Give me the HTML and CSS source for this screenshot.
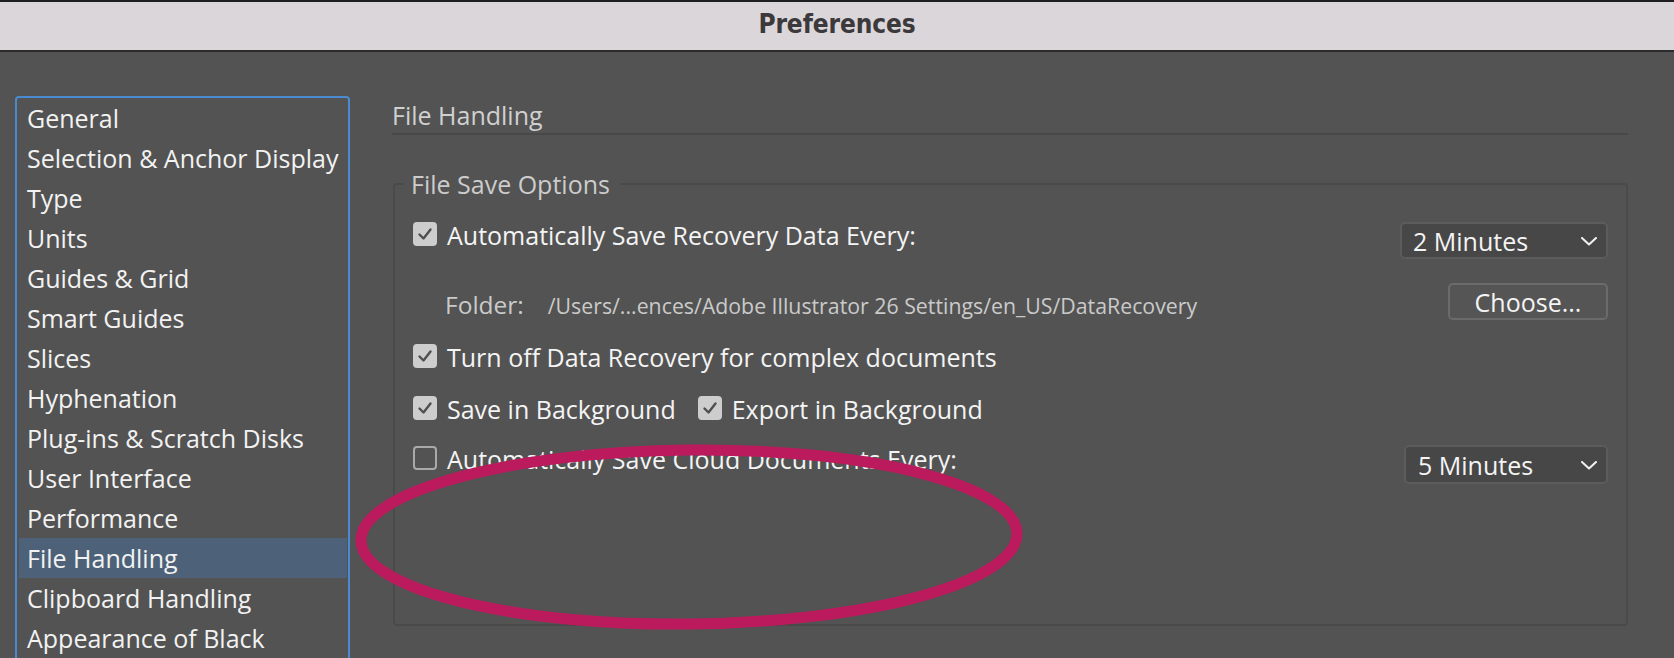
FILE: index.html
```html
<!DOCTYPE html>
<html lang="en">
<head>
<meta charset="utf-8">
<title>Preferences</title>
<link rel="stylesheet" href="styles.css">
</head>
<body>
<div class="window">
  <header class="titlebar"><span class="title">Preferences</span></header>
  <div class="content">
    <nav class="sidebar">
      <div class="item">General</div>
      <div class="item">Selection &amp; Anchor Display</div>
      <div class="item">Type</div>
      <div class="item">Units</div>
      <div class="item">Guides &amp; Grid</div>
      <div class="item">Smart Guides</div>
      <div class="item">Slices</div>
      <div class="item">Hyphenation</div>
      <div class="item">Plug-ins &amp; Scratch Disks</div>
      <div class="item">User Interface</div>
      <div class="item">Performance</div>
      <div class="item selected">File Handling</div>
      <div class="item">Clipboard Handling</div>
      <div class="item">Appearance of Black</div>
    </nav>
    <main class="main">
      <h2 class="section-title">File Handling</h2>
      <fieldset class="group">
        <legend class="legend">File Save Options</legend>
        <div class="row row-1">
          <label class="check"><span class="box checked"><svg viewBox="0 0 24 24" width="24" height="24"><path d="M6.5 12.5 L10.5 16.5 L17.5 7.5" fill="none" stroke="#4f4f4f" stroke-width="2.4" stroke-linecap="round" stroke-linejoin="round"/></svg></span><span class="label">Automatically Save Recovery Data Every:</span></label>
          <div class="select select-1"><span>2 Minutes</span><svg class="chev" viewBox="0 0 16 9" width="16" height="9"><path d="M1 1 L8 7.5 L15 1" fill="none" stroke="#f2f2f2" stroke-width="2" stroke-linecap="round" stroke-linejoin="round"/></svg></div>
        </div>
        <div class="row row-2">
          <div class="folder"><span class="folder-label">Folder:</span><span class="path">/Users/...ences/Adobe Illustrator 26 Settings/en_US/DataRecovery</span></div>
          <button class="btn">Choose...</button>
        </div>
        <div class="row row-3">
          <label class="check"><span class="box checked"><svg viewBox="0 0 24 24" width="24" height="24"><path d="M6.5 12.5 L10.5 16.5 L17.5 7.5" fill="none" stroke="#4f4f4f" stroke-width="2.4" stroke-linecap="round" stroke-linejoin="round"/></svg></span><span class="label">Turn off Data Recovery for complex documents</span></label>
        </div>
        <div class="row row-4">
          <label class="check"><span class="box checked"><svg viewBox="0 0 24 24" width="24" height="24"><path d="M6.5 12.5 L10.5 16.5 L17.5 7.5" fill="none" stroke="#4f4f4f" stroke-width="2.4" stroke-linecap="round" stroke-linejoin="round"/></svg></span><span class="label">Save in Background</span></label>
          <label class="check check-2"><span class="box checked"><svg viewBox="0 0 24 24" width="24" height="24"><path d="M6.5 12.5 L10.5 16.5 L17.5 7.5" fill="none" stroke="#4f4f4f" stroke-width="2.4" stroke-linecap="round" stroke-linejoin="round"/></svg></span><span class="label">Export in Background</span></label>
        </div>
        <div class="row row-5">
          <label class="check check-cloud"><span class="box"></span><span class="label">Automatically Save Cloud Documents Every:</span></label>
          <div class="select select-2"><span>5 Minutes</span><svg class="chev" viewBox="0 0 16 9" width="16" height="9"><path d="M1 1 L8 7.5 L15 1" fill="none" stroke="#f2f2f2" stroke-width="2" stroke-linecap="round" stroke-linejoin="round"/></svg></div>
        </div>
      </fieldset>
    </main>
  </div>
  <svg class="annotation" width="680" height="200" viewBox="0 0 680 200">
    <ellipse cx="335" cy="93" rx="328" ry="87" fill="none" stroke="#bb1a5d" stroke-width="11" transform="rotate(-0.6 335 93)"/>
  </svg>
</div>
</body>
</html>
```
FILE: styles.css
```css
* { box-sizing: border-box; }
html, body {
  margin: 0;
  padding: 0;
  background: #535353;
  overflow: hidden;
}
body {
  width: 1674px;
  height: 658px;
  font-family: "Open Sans", "Noto Sans", sans-serif;
  color: #f2f2f2;
}
.window {
  position: relative;
  width: 1674px;
  height: 658px;
  overflow: hidden;
}
.titlebar {
  height: 52px;
  border-top: 2px solid #1e1e1e;
  border-bottom: 2px solid #2c2c2c;
  background: #dbd6d9;
  display: flex;
  justify-content: center;
  align-items: flex-start;
}
.title {
  font-family: "DejaVu Sans Condensed", "DejaVu Sans", sans-serif;
  font-stretch: condensed;
  font-weight: bold;
  font-size: 26px;
  line-height: 44px;
  color: #3b393b;
  letter-spacing: -0.1px;
}
.content {
  display: flex;
  padding: 44px 0 0 15px;
}
.sidebar {
  width: 335px;
  height: 600px;
  border: 2px solid #4a8ad0;
  border-radius: 4px 4px 0 0;
  flex-shrink: 0;
}
.item {
  height: 40px;
  line-height: 40px;
  font-size: 25px;
  padding-left: 8px;
  margin: 0 1px 0 2px;
  color: #f2f2f2;
  white-space: nowrap;
}
.item.selected {
  background: #4d6278;
}
.main {
  margin-left: 42px;
  width: 1236px;
  padding-top: 3px;
}
.section-title {
  margin: 0;
  font-weight: normal;
  font-size: 25px;
  line-height: 32px;
  height: 36px;
  color: #d0d0d0;
  border-bottom: 2px solid #484848;
}
.group {
  margin: 34px 0 0 1px;
  padding: 23px 18px 140px 18px;
  border: 2px solid #4a4a4a;
  border-radius: 4px;
  min-width: 0;
}
.legend {
  font-size: 25px;
  line-height: 30px;
  color: #cccccc;
  padding: 0 10px 0 7px;
  margin-left: -9px;
}
.row {
  display: flex;
  align-items: flex-start;
  justify-content: space-between;
}
.row-2 { margin-top: 24px; }
.row-3 { margin-top: 24px; }
.row-4 { margin-top: 26px; justify-content: flex-start; }
.row-5 { margin-top: 23px; }
.check {
  display: flex;
  align-items: flex-start;
  font-size: 25px;
  line-height: 26px;
  color: #f4f4f4;
  white-space: nowrap;
}
.check-2 { margin-left: 22px; }
.check-cloud { padding-top: 1px; }
.box {
  width: 24px;
  height: 24px;
  border-radius: 4px;
  margin-right: 10px;
  border: 2px solid #a9a9a9;
  flex-shrink: 0;
  display: block;
  position: relative;
}
.box.checked {
  background: #cdcdcd;
  border-color: #cdcdcd;
}
.box svg {
  display: block;
  margin: -2px;
}
.select {
  height: 37px;
  border: 2px solid #5c5c5c;
  border-radius: 5px;
  background: #474747;
  display: flex;
  align-items: center;
  justify-content: space-between;
  padding: 0 9px 0 11px;
  font-size: 25px;
  color: #f4f4f4;
}
.select-1 { width: 208px; }
.select-2 { width: 204px; height: 39px; padding-left: 12px; }
.chev { display: block; margin-top: 2px; }
.folder {
  padding: 9px 0 0 32px;
  display: flex;
  align-items: baseline;
  white-space: nowrap;
}
.folder-label {
  font-size: 24.5px;
  line-height: 26px;
  color: #cacaca;
}
.path {
  margin-left: 24px;
  font-size: 21.3px;
  line-height: 26px;
  color: #cacaca;
}
.btn {
  width: 160px;
  height: 37px;
  border: 2px solid #6b6b6b;
  border-radius: 5px;
  background: #555555;
  color: #f4f4f4;
  font-family: "Open Sans", "Noto Sans", sans-serif;
  font-size: 25px;
  line-height: 30px;
  padding: 0;
  margin-right: 0;
}
.annotation {
  position: absolute;
  left: 354px;
  top: 444px;
  pointer-events: none;
}
```
